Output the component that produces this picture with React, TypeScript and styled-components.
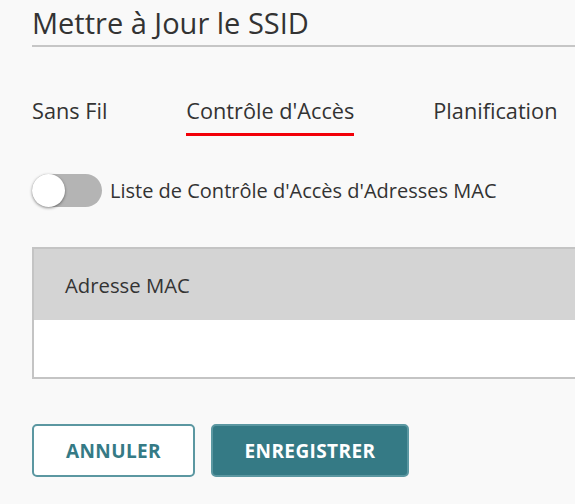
import { useState } from "react";
import styled, { createGlobalStyle } from "styled-components";

const GlobalStyle = createGlobalStyle`
  html, body {
    margin: 0;
    padding: 0;
    background: #f9f9f9;
    overflow: hidden;
  }
  body {
    font-family: "Open Sans", "Noto Sans", sans-serif;
    color: #333;
  }
`;

const Page = styled.div`
  width: 640px;
  padding: 4px 0 0 32px;
`;

const Title = styled.h1`
  margin: 0;
  font-size: 29px;
  font-weight: 400;
  line-height: 38px;
  padding-bottom: 3px;
  border-bottom: 2px solid #c6c6c6;
  color: #333;
`;

const Tabs = styled.nav`
  display: flex;
  gap: 79px;
  margin-top: 50px;
`;

const Tab = styled.button<{ $active?: boolean }>`
  background: none;
  border: none;
  padding: 0 0 8px;
  font-family: inherit;
  font-size: 21.7px;
  line-height: 28px;
  color: #333;
  cursor: pointer;
  border-bottom: 3px solid ${(p) => (p.$active ? "#f20008" : "transparent")};
`;

const ToggleRow = styled.label`
  display: flex;
  align-items: center;
  gap: 8px;
  margin-top: 38px;
  font-size: 20px;
  cursor: pointer;
`;

const Track = styled.span<{ $on: boolean }>`
  position: relative;
  flex: none;
  width: 70px;
  height: 33px;
  border-radius: 17px;
  background: ${(p) => (p.$on ? "#357a85" : "#b4b4b4")};
`;

const Knob = styled.span<{ $on: boolean }>`
  position: absolute;
  top: 0;
  left: ${(p) => (p.$on ? "37px" : "0")};
  width: 33px;
  height: 33px;
  border-radius: 50%;
  background: #fff;
  box-shadow: 0 1px 3px rgba(0, 0, 0, 0.45);
`;

const Table = styled.table`
  width: 100%;
  margin-top: 40px;
  border-collapse: collapse;
  border: 2px solid #c4c4c4;
  background: #fff;
`;

const HeadCell = styled.th`
  text-align: left;
  height: 71px;
  padding: 0 0 0 31px;
  background: #d4d4d4;
  font-size: 20.3px;
  font-weight: 400;
  color: #333;
`;

const BodyCell = styled.td`
  height: 55px;
`;

const Actions = styled.div`
  display: flex;
  gap: 16px;
  margin-top: 45px;
`;

const Button = styled.button<{ $primary?: boolean }>`
  height: 53px;
  padding: 0;
  border-radius: 5px;
  border: 2px solid #5b97a1;
  background: ${(p) => (p.$primary ? "#357a85" : "#fff")};
  color: ${(p) => (p.$primary ? "#fff" : "#357a85")};
  font-family: inherit;
  font-size: 19px;
  letter-spacing: 0.4px;
  font-weight: 700;
  cursor: pointer;
`;

const CancelButton = styled(Button)`
  width: 163px;
`;

const SaveButton = styled(Button)`
  width: 198px;
`;

export default function App() {
  const [on, setOn] = useState(false);
  const tabs = ["Sans Fil", "Contrôle d'Accès", "Planification"];
  const [active, setActive] = useState(1);

  return (
    <>
      <GlobalStyle />
      <Page>
        <Title>Mettre à Jour le SSID</Title>
        <Tabs>
          {tabs.map((t, i) => (
            <Tab key={t} $active={i === active} onClick={() => setActive(i)}>
              {t}
            </Tab>
          ))}
        </Tabs>
        <ToggleRow onClick={() => setOn(!on)}>
          <Track $on={on}>
            <Knob $on={on} />
          </Track>
          Liste de Contrôle d'Accès d'Adresses MAC
        </ToggleRow>
        <Table>
          <thead>
            <tr>
              <HeadCell>Adresse MAC</HeadCell>
            </tr>
          </thead>
          <tbody>
            <tr>
              <BodyCell />
            </tr>
          </tbody>
        </Table>
        <Actions>
          <CancelButton>ANNULER</CancelButton>
          <SaveButton $primary>ENREGISTRER</SaveButton>
        </Actions>
      </Page>
    </>
  );
}
